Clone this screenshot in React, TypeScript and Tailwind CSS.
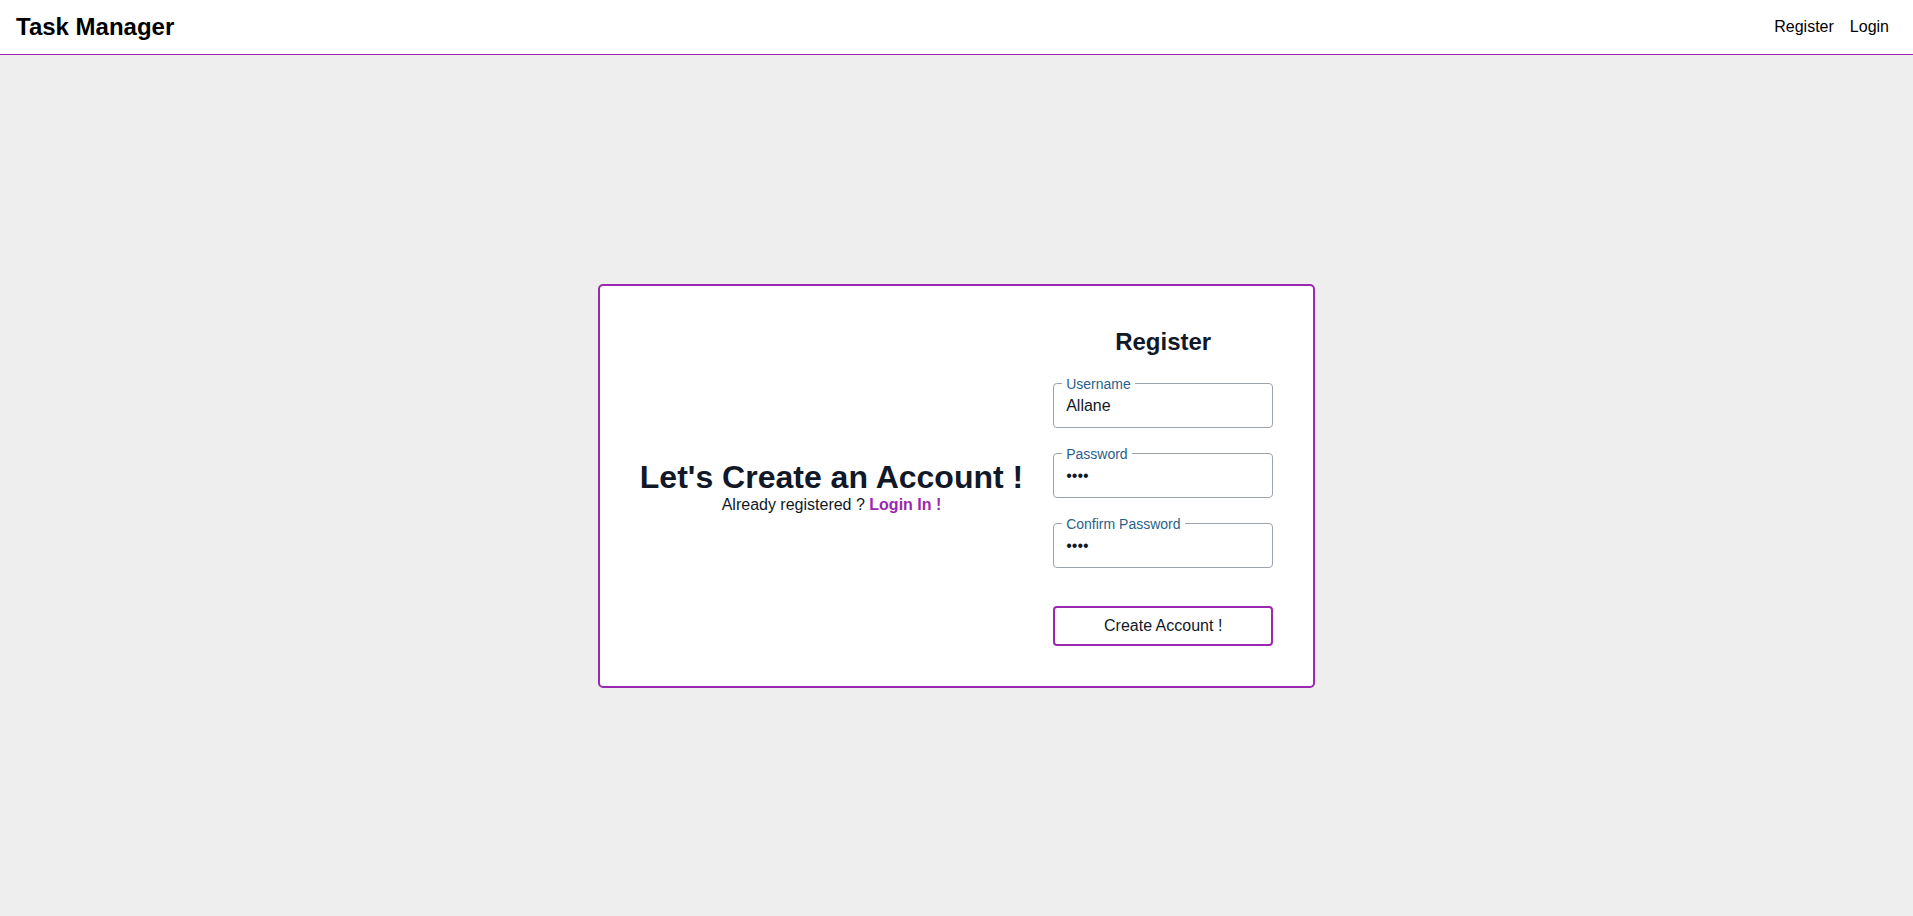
import React from "react";

function Field({ label, type, value }: { label: string; type: string; value: string }) {
  return (
    <fieldset className="m-0 min-w-0 rounded-[4px] border border-[#9ca3af] px-2 pb-[9px]">
      <legend className="px-1 text-sm leading-5 text-[#2a5f8c]">{label}</legend>
      <input
        type={type}
        defaultValue={value}
        className="block h-6 w-full bg-transparent pl-1 text-base leading-6 text-[#111827] outline-none"
      />
    </fieldset>
  );
}

export default function App() {
  return (
    <div
      className="flex h-screen flex-col bg-[#eeeeee]"
      style={{ fontFamily: '"Liberation Sans", Arial, sans-serif' }}
    >
      <header className="flex h-[55px] shrink-0 items-center justify-between border-b border-[#9c27b0] bg-white pl-4 pr-6">
        <h1 className="text-2xl leading-8 font-bold text-black">Task Manager</h1>
        <nav className="flex items-center gap-4 text-base leading-6 text-black">
          <a href="#">Register</a>
          <a href="#">Login</a>
        </nav>
      </header>
      <main className="flex flex-1 items-center justify-center">
        <div className="flex items-center gap-[30px] rounded-[5px] border-2 border-[#9c27b0] bg-white p-10">
          <div className="mt-[6px] flex flex-col items-center text-center text-[#111827]">
            <h2 className="text-[32px] leading-8 font-bold">Let's Create an Account !</h2>
            <p className="text-base leading-6">
              Already registered ?{" "}
              <a href="#" className="font-bold text-[#9c27b0]">
                Login In !
              </a>
            </p>
          </div>
          <form className="flex w-[220px] flex-col gap-4" onSubmit={(e) => e.preventDefault()}>
            <h2 className="text-center text-2xl leading-8 font-bold text-[#111827]">Register</h2>
            <Field label="Username" type="text" value="Allane" />
            <Field label="Password" type="password" value="1234" />
            <Field label="Confirm Password" type="password" value="1234" />
            <button
              type="submit"
              className="mt-[22px] h-10 rounded-[4px] border-2 border-[#9c27b0] bg-white text-base text-[#111827]"
            >
              Create Account !
            </button>
          </form>
        </div>
      </main>
    </div>
  );
}
